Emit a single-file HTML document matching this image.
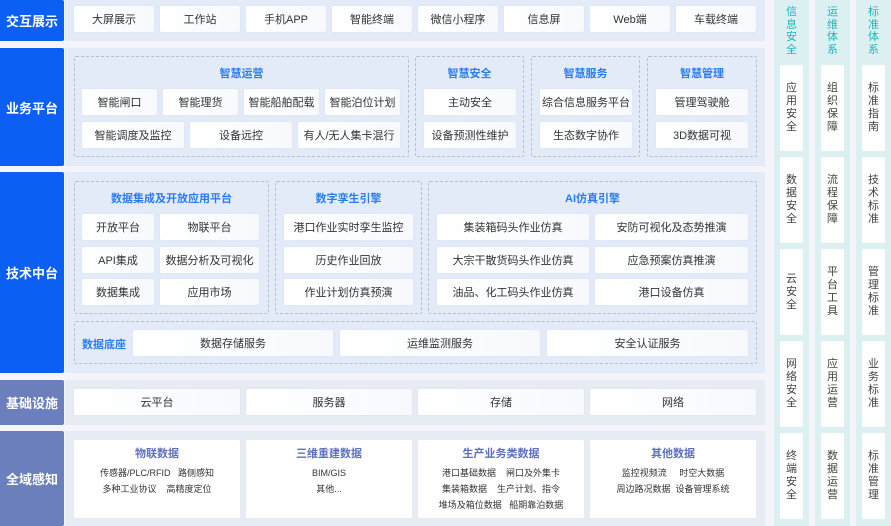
<!DOCTYPE html>
<html><head><meta charset="utf-8"><style>
*{margin:0;padding:0;box-sizing:border-box}
body{width:891px;height:526px;background:#f3f5fa;position:relative;overflow:hidden;font-family:"Liberation Sans","Noto Sans CJK SC",sans-serif;color:#333;}
div{position:absolute}
.lab{left:0;width:64px;background:#0b5ff2;color:#fff;font-size:13px;font-weight:bold;display:flex;align-items:center;justify-content:center;border-radius:0 2px 2px 0}
.lab2{background:#6b7fbc}
.bg{left:65px;width:700px;background:#e3ebf9}
.bg2{background:#e7ebf3}
.c{background:linear-gradient(90deg,#fff,#f7f9fd);border-radius:2px;font-size:11px;color:#333;display:flex;align-items:center;justify-content:center;white-space:nowrap;box-shadow:0 0 2px rgba(150,170,210,.15)}
.g{border:1px dashed #b5bfcf;border-radius:2px}
.t{font-size:11px;font-weight:bold;color:#2a7cf0;text-align:center;white-space:nowrap}
.col{top:0;width:35px;height:526px;background:#dcf0f2}
.ch{width:35px;text-align:center;color:#1eb6ba;font-size:11px;line-height:12.5px;top:6px}
.vc{width:23px;background:#fff;border-radius:2px;font-size:11px;line-height:13px;color:#444;display:flex;align-items:center;justify-content:center;text-align:center}
.bc{background:#fff;border-radius:2px;top:440px;height:78px;width:166px;text-align:center;font-size:9px;color:#333;line-height:16px}
.bc b{display:block;font-size:11px;color:#5c6fc0;font-weight:bold;margin-top:6px;margin-bottom:3px}
</style></head><body>
<div class="lab" style="top:0;height:41px">交互展示</div>
<div class="bg" style="top:0;height:41px"></div>
<div class="c" style="left:74px;top:6px;width:80px;height:26px">大屏展示</div>
<div class="c" style="left:160px;top:6px;width:80px;height:26px">工作站</div>
<div class="c" style="left:246px;top:6px;width:80px;height:26px">手机APP</div>
<div class="c" style="left:332px;top:6px;width:80px;height:26px">智能终端</div>
<div class="c" style="left:418px;top:6px;width:80px;height:26px">微信小程序</div>
<div class="c" style="left:504px;top:6px;width:80px;height:26px">信息屏</div>
<div class="c" style="left:590px;top:6px;width:80px;height:26px">Web端</div>
<div class="c" style="left:676px;top:6px;width:80px;height:26px">车载终端</div>

<div class="lab" style="top:48px;height:118px">业务平台</div>
<div class="bg" style="top:48px;height:118px"></div>
<div class="g" style="left:74px;top:56px;width:335px;height:101px"></div>
<div class="t" style="left:74px;top:65px;width:335px">智慧运营</div>
<div class="c" style="left:82px;top:89px;width:75px;height:26px">智能闸口</div>
<div class="c" style="left:163px;top:89px;width:75px;height:26px">智能理货</div>
<div class="c" style="left:244px;top:89px;width:75px;height:26px">智能船舶配载</div>
<div class="c" style="left:325px;top:89px;width:75px;height:26px">智能泊位计划</div>
<div class="c" style="left:82px;top:122px;width:102px;height:26px">智能调度及监控</div>
<div class="c" style="left:190px;top:122px;width:102px;height:26px">设备远控</div>
<div class="c" style="left:298px;top:122px;width:102px;height:26px">有人/无人集卡混行</div>
<div class="g" style="left:415px;top:56px;width:109px;height:101px"></div>
<div class="t" style="left:415px;top:65px;width:109px">智慧安全</div>
<div class="c" style="left:424px;top:89px;width:92px;height:26px">主动安全</div>
<div class="c" style="left:424px;top:122px;width:92px;height:26px">设备预测性维护</div>
<div class="g" style="left:531px;top:56px;width:109px;height:101px"></div>
<div class="t" style="left:531px;top:65px;width:109px">智慧服务</div>
<div class="c" style="left:540px;top:89px;width:92px;height:26px">综合信息服务平台</div>
<div class="c" style="left:540px;top:122px;width:92px;height:26px">生态数字协作</div>
<div class="g" style="left:647px;top:56px;width:110px;height:101px"></div>
<div class="t" style="left:647px;top:65px;width:110px">智慧管理</div>
<div class="c" style="left:656px;top:89px;width:92px;height:26px">管理驾驶舱</div>
<div class="c" style="left:656px;top:122px;width:92px;height:26px">3D数据可视</div>

<div class="lab" style="top:172px;height:201px">技术中台</div>
<div class="bg" style="top:172px;height:201px"></div>
<div class="g" style="left:74px;top:181px;width:195px;height:133px"></div>
<div class="t" style="left:74px;top:190px;width:195px">数据集成及开放应用平台</div>
<div class="c" style="left:82px;top:214px;width:72px;height:26px">开放平台</div>
<div class="c" style="left:160px;top:214px;width:99px;height:26px">物联平台</div>
<div class="c" style="left:82px;top:247px;width:72px;height:26px">API集成</div>
<div class="c" style="left:160px;top:247px;width:99px;height:26px">数据分析及可视化</div>
<div class="c" style="left:82px;top:279px;width:72px;height:26px">数据集成</div>
<div class="c" style="left:160px;top:279px;width:99px;height:26px">应用市场</div>
<div class="g" style="left:275px;top:181px;width:147px;height:133px"></div>
<div class="t" style="left:275px;top:190px;width:147px">数字孪生引擎</div>
<div class="c" style="left:284px;top:214px;width:129px;height:26px">港口作业实时孪生监控</div>
<div class="c" style="left:284px;top:247px;width:129px;height:26px">历史作业回放</div>
<div class="c" style="left:284px;top:279px;width:129px;height:26px">作业计划仿真预演</div>
<div class="g" style="left:428px;top:181px;width:329px;height:133px"></div>
<div class="t" style="left:428px;top:190px;width:329px">AI仿真引擎</div>
<div class="c" style="left:437px;top:214px;width:152px;height:26px">集装箱码头作业仿真</div>
<div class="c" style="left:595px;top:214px;width:153px;height:26px">安防可视化及态势推演</div>
<div class="c" style="left:437px;top:247px;width:152px;height:26px">大宗干散货码头作业仿真</div>
<div class="c" style="left:595px;top:247px;width:153px;height:26px">应急预案仿真推演</div>
<div class="c" style="left:437px;top:279px;width:152px;height:26px">油品、化工码头作业仿真</div>
<div class="c" style="left:595px;top:279px;width:153px;height:26px">港口设备仿真</div>
<div class="g" style="left:74px;top:321px;width:683px;height:43px"></div>
<div class="t" style="left:82px;top:336px;width:44px;text-align:left">数据底座</div>
<div class="c" style="left:133px;top:330px;width:200px;height:26px">数据存储服务</div>
<div class="c" style="left:340px;top:330px;width:200px;height:26px">运维监测服务</div>
<div class="c" style="left:547px;top:330px;width:201px;height:26px">安全认证服务</div>

<div class="lab lab2" style="top:380px;height:45px">基础设施</div>
<div class="bg bg2" style="top:380px;height:45px"></div>
<div class="c" style="left:74px;top:389px;width:166px;height:26px">云平台</div>
<div class="c" style="left:246px;top:389px;width:166px;height:26px">服务器</div>
<div class="c" style="left:418px;top:389px;width:166px;height:26px">存储</div>
<div class="c" style="left:590px;top:389px;width:166px;height:26px">网络</div>

<div class="lab lab2" style="top:431px;height:95px">全域感知</div>
<div class="bg bg2" style="top:431px;height:95px"></div>
<div class="bc" style="left:74px"><b>物联数据</b>传感器/PLC/RFID&nbsp;&nbsp;&nbsp;路侧感知<br>多种工业协议&nbsp;&nbsp;&nbsp;&nbsp;高精度定位</div>
<div class="bc" style="left:246px"><b>三维重建数据</b>BIM/GIS<br>其他...</div>
<div class="bc" style="left:418px"><b>生产业务类数据</b>港口基础数据&nbsp;&nbsp;&nbsp;&nbsp;闸口及外集卡<br>集装箱数据&nbsp;&nbsp;&nbsp;&nbsp;生产计划、指令<br>堆场及箱位数据&nbsp;&nbsp;&nbsp;船期靠泊数据</div>
<div class="bc" style="left:590px"><b>其他数据</b>监控视频流&nbsp;&nbsp;&nbsp;&nbsp;&nbsp;时空大数据<br>周边路况数据&nbsp;&nbsp;设备管理系统</div>

<div class="col" style="left:774px"></div>
<div class="col" style="left:815px"></div>
<div class="col" style="left:856px"></div>
<div class="ch" style="left:774px">信<br>息<br>安<br>全</div>
<div class="ch" style="left:815px">运<br>维<br>体<br>系</div>
<div class="ch" style="left:856px">标<br>准<br>体<br>系</div>

<div class="vc" style="left:780px;top:65px;height:86px">应<br>用<br>安<br>全</div>
<div class="vc" style="left:780px;top:157px;height:86px">数<br>据<br>安<br>全</div>
<div class="vc" style="left:780px;top:249px;height:86px">云<br>安<br>全</div>
<div class="vc" style="left:780px;top:341px;height:86px">网<br>络<br>安<br>全</div>
<div class="vc" style="left:780px;top:433px;height:86px">终<br>端<br>安<br>全</div>
<div class="vc" style="left:821px;top:65px;height:86px">组<br>织<br>保<br>障</div>
<div class="vc" style="left:821px;top:157px;height:86px">流<br>程<br>保<br>障</div>
<div class="vc" style="left:821px;top:249px;height:86px">平<br>台<br>工<br>具</div>
<div class="vc" style="left:821px;top:341px;height:86px">应<br>用<br>运<br>营</div>
<div class="vc" style="left:821px;top:433px;height:86px">数<br>据<br>运<br>营</div>
<div class="vc" style="left:862px;top:65px;height:86px">标<br>准<br>指<br>南</div>
<div class="vc" style="left:862px;top:157px;height:86px">技<br>术<br>标<br>准</div>
<div class="vc" style="left:862px;top:249px;height:86px">管<br>理<br>标<br>准</div>
<div class="vc" style="left:862px;top:341px;height:86px">业<br>务<br>标<br>准</div>
<div class="vc" style="left:862px;top:433px;height:86px">标<br>准<br>管<br>理</div>
</body></html>
